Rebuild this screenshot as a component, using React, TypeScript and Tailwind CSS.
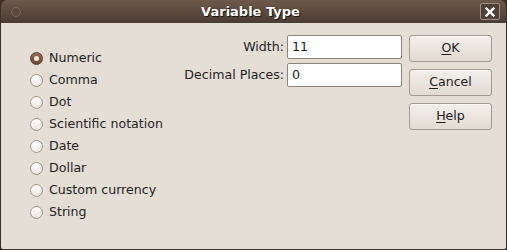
import { ReactElement } from 'react';

const options = [
  'Numeric',
  'Comma',
  'Dot',
  'Scientific notation',
  'Date',
  'Dollar',
  'Custom currency',
  'String',
];

const Radio = ({ checked }: { checked: boolean }): ReactElement =>
  checked ? (
    <span className="w-[13px] h-[13px] rounded-full border border-[#5e4131] bg-gradient-to-b from-[#9a6a52] to-[#6e4634] flex items-center justify-center shrink-0">
      <span className="w-[5px] h-[5px] rounded-full bg-[#f4ece6]" />
    </span>
  ) : (
    <span className="w-[13px] h-[13px] rounded-full border border-[#a3978b] bg-gradient-to-b from-[#ffffff] to-[#efe9e3] shrink-0" />
  );

const Button = ({ mn, rest }: { mn: string; rest: string }): ReactElement => (
  <button className="w-[83px] h-[27px] rounded-[3px] border border-[#a39a90] bg-gradient-to-b from-[#f3f0ec] to-[#e3dbd2] text-[12.6px] text-[#1e1e1e] shadow-[inset_0_1px_0_#fbf9f7]">
    <span className="underline underline-offset-2">{mn}</span>
    {rest}
  </button>
);

const App = (): ReactElement => {
  return (
    <div className="w-[507px] h-[250px] font-['DejaVu_Sans',sans-serif] bg-[#3c3028]">
      <div className="w-full h-full rounded-t-[7px] overflow-hidden flex flex-col border-x border-b border-[#3a2f28] rounded-b-[3px]">
        {/* Title bar */}
        <div className="h-[23px] shrink-0 bg-gradient-to-b from-[#6e594b] to-[#4a3c33] flex items-center px-[10px]">
          <span className="w-[10px] h-[10px] rounded-full border border-[#7d6a5d] bg-[#5a4a3f]" />
          <div className="flex-1 text-center text-white font-bold text-[13px] [text-shadow:1px_1px_1px_#1a120d]">
            Variable Type
          </div>
          <span className="w-[20px] h-[17px] border border-[#a09084] rounded-[2px] bg-[#4f4037] flex items-center justify-center mr-[-4px]">
            <svg width="10" height="10" viewBox="0 0 10 10">
              <path d="M1.5 1.5L8.5 8.5M8.5 1.5L1.5 8.5" stroke="white" strokeWidth="2.4" strokeLinecap="square" />
            </svg>
          </span>
        </div>

        {/* Body */}
        <div className="flex-1 bg-[#e5ded5] flex pt-[12px] pl-[29px] pr-[14px] text-[12.6px] text-[#1e1e1e]">
          <div className="flex-1 flex flex-col mt-[12px]">
            {options.map((o, i) => (
              <label key={o} className="h-[22px] flex items-center gap-[6px]">
                <Radio checked={i === 0} />
                <span>{o}</span>
              </label>
            ))}
          </div>

          <div className="grid grid-cols-[auto_115px] gap-x-[3px] gap-y-[4px] auto-rows-[24px] self-start">
            <span className="text-right self-center">Width:</span>
            <div className="bg-white border border-[#8f847a] rounded-[2px] flex items-center px-[4px]">11</div>
            <span className="text-right self-center">Decimal Places:</span>
            <div className="bg-white border border-[#8f847a] rounded-[2px] flex items-center px-[4px]">0</div>
          </div>

          <div className="flex flex-col gap-[7px] ml-[7px]">
            <Button mn="O" rest="K" />
            <Button mn="C" rest="ancel" />
            <Button mn="H" rest="elp" />
          </div>
        </div>
      </div>
    </div>
  );
};

export default App;
